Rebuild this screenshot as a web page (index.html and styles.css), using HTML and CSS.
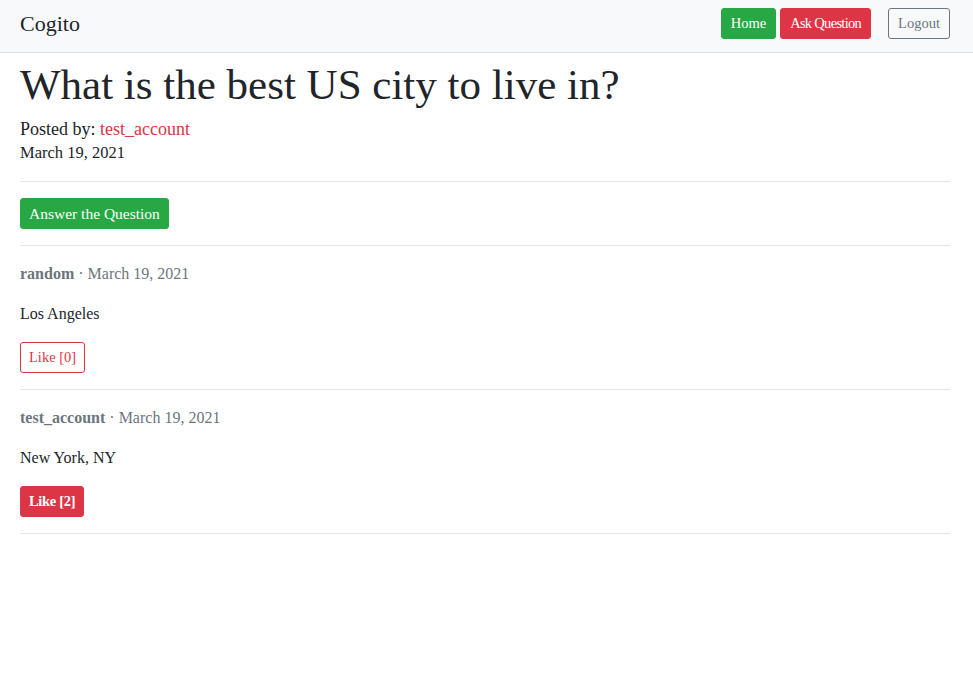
FILE: index.html
```html
<!DOCTYPE html>
<html>
<head>
<meta charset="utf-8">
<link rel="stylesheet" href="styles.css">
</head>
<body>
<nav class="navbar">
  <div class="brand">Cogito</div>
  <div class="nav-actions">
    <a class="btn btn-success">Home</a>
    <a class="btn btn-danger tight">Ask Question</a>
    <a class="btn btn-outline logout">Logout</a>
  </div>
</nav>
<main class="content">
  <h1 class="title">What is the best US city to live in?</h1>
  <div class="meta posted">Posted by: <a class="author">test_account</a></div>
  <div class="meta date">March 19, 2021</div>
  <hr class="rule">
  <a class="btn btn-success btn-compact answer-btn">Answer the Question</a>
  <hr class="rule">
  <section class="answer">
    <div class="answer-head"><b>random</b> · March 19, 2021</div>
    <p class="answer-body">Los Angeles</p>
    <a class="btn btn-outline-danger btn-compact">Like [0]</a>
  </section>
  <hr class="rule">
  <section class="answer">
    <div class="answer-head"><b>test_account</b> · March 19, 2021</div>
    <p class="answer-body">New York, NY</p>
    <a class="btn btn-danger btn-compact bold">Like [2]</a>
  </section>
  <hr class="rule">
</main>
</body>
</html>
```
FILE: styles.css
```css
html, body { margin: 0; padding: 0; background: #fff; }
body {
  font-family: "Liberation Serif", serif;
  color: #212529;
  font-size: 16px;
  line-height: 1.5;
}
.navbar {
  display: flex;
  align-items: flex-start;
  justify-content: space-between;
  height: 53px;
  box-sizing: border-box;
  padding: 8px 23px 0 20px;
  background: #f8f9fa;
  border-bottom: 1px solid #dee2e6;
}
.brand { font-size: 22px; line-height: 31px; color: #212529; }
.nav-actions { display: flex; gap: 4px; align-items: center; }
.nav-actions .logout { margin-left: 13px; }
.btn {
  display: inline-block;
  font-family: "Liberation Serif", serif;
  font-size: 14.5px;
  line-height: 21px;
  padding: 4px 9px;
  border: 1px solid transparent;
  border-radius: 3px;
  cursor: pointer;
}
.tight { letter-spacing: -0.7px; }
.btn-compact { padding: 4px 8px; font-size: 14.5px; }
.answer-btn { font-size: 15.5px; }
.btn-success { background: #28a745; border-color: #28a745; color: #fff; }
.btn-danger { background: #dc3545; border-color: #dc3545; color: #fff; }
.btn-outline { background: transparent; border-color: #6c757d; color: #6c757d; }
.btn-outline-danger { background: transparent; border-color: #dc3545; color: #dc3545; }
.bold { font-weight: bold; letter-spacing: -0.3px; }
.content { padding: 0 23px 0 20px; }
.title {
  font-family: "Liberation Serif", serif;
  font-weight: normal;
  font-size: 43px;
  line-height: 1.2;
  margin: 6px 0 6px;
}
.meta { line-height: 24px; }
.posted { font-size: 18px; }
.date { font-size: 16.5px; }
.author { color: #dc3545; }
.rule { border: 0; border-top: 1px solid #e5e5e5; margin: 16px 0 16px; }
.answer-head { color: #6c757d; font-size: 16px; line-height: 24px; }
.answer-head b { font-weight: bold; }
.answer-body { margin: 16px 0 16px; font-size: 16px; line-height: 24px; }
```
